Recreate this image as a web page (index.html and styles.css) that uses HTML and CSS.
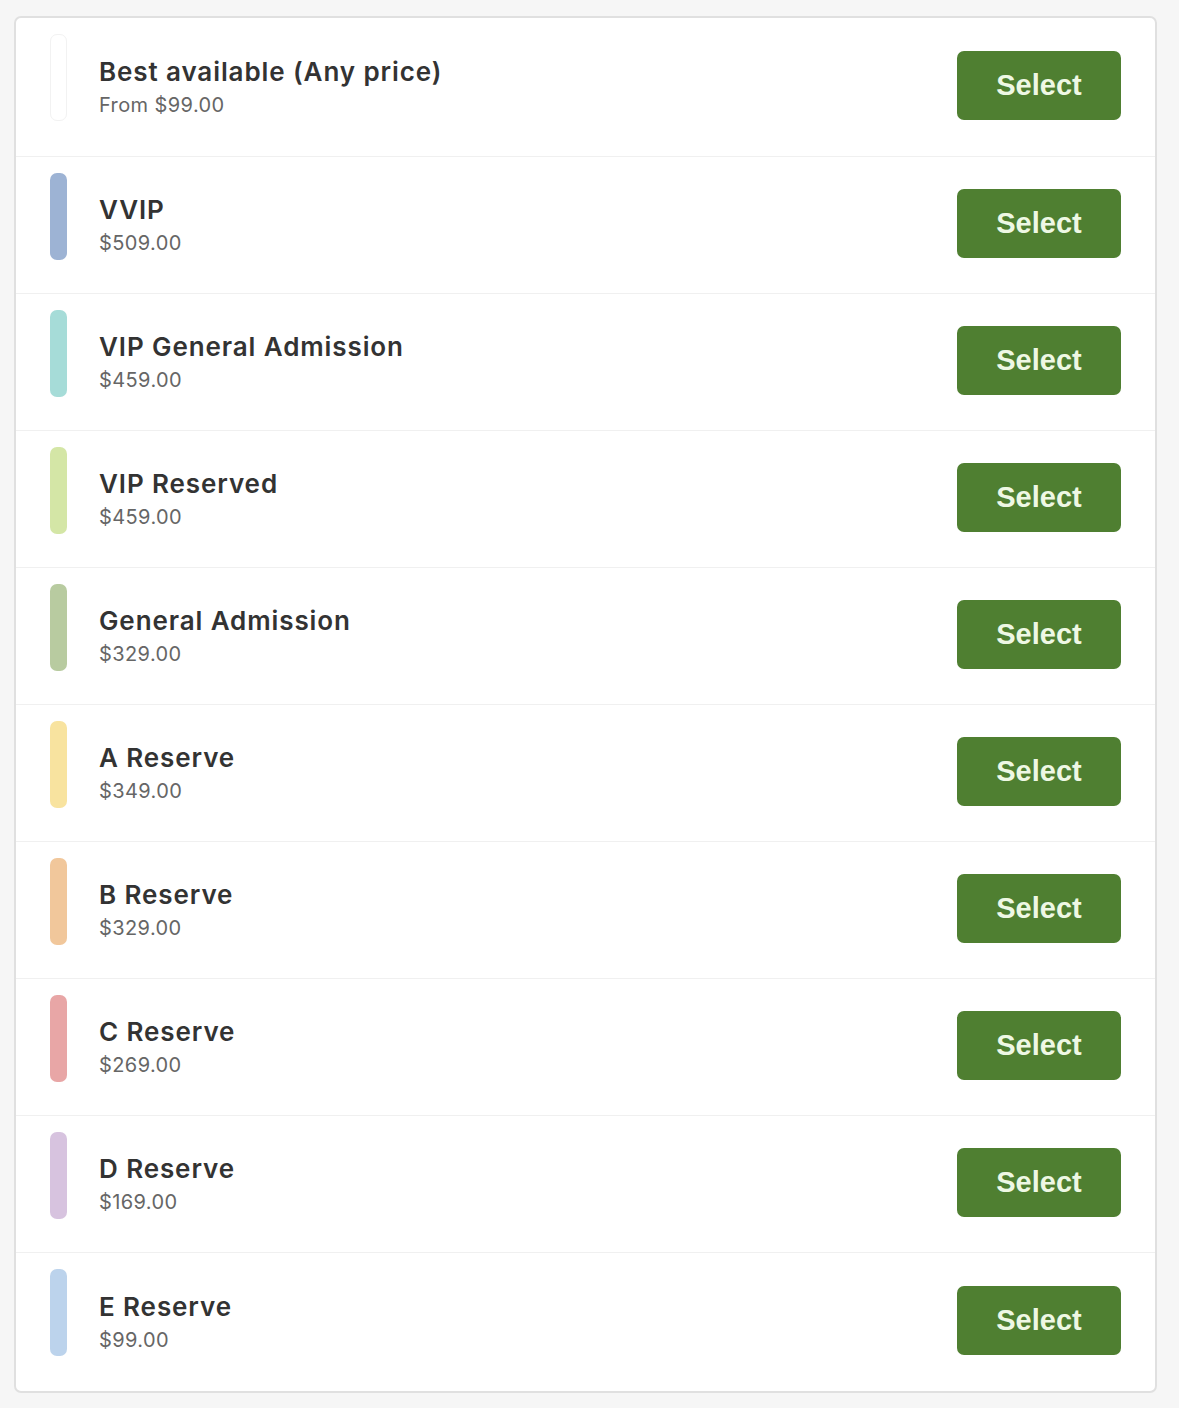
FILE: index.html
```html
<!DOCTYPE html>
<html lang="en">
<head>
  <meta charset="UTF-8">
  <meta name="viewport" content="width=device-width, initial-scale=1.0">
  <title>Tickets</title>
  <link rel="stylesheet" href="styles.css">
</head>
<body>
  <div class="card">
    <div class="row">
      <span class="swatch swatch-any"></span>
      <div class="info">
        <div class="name">Best available (Any price)</div>
        <div class="price">From $99.00</div>
      </div>
      <button class="select-btn">Select</button>
    </div>
    <div class="row">
      <span class="swatch swatch-vvip"></span>
      <div class="info">
        <div class="name">VVIP</div>
        <div class="price">$509.00</div>
      </div>
      <button class="select-btn">Select</button>
    </div>
    <div class="row">
      <span class="swatch swatch-vipga"></span>
      <div class="info">
        <div class="name">VIP General Admission</div>
        <div class="price">$459.00</div>
      </div>
      <button class="select-btn">Select</button>
    </div>
    <div class="row">
      <span class="swatch swatch-vipres"></span>
      <div class="info">
        <div class="name">VIP Reserved</div>
        <div class="price">$459.00</div>
      </div>
      <button class="select-btn">Select</button>
    </div>
    <div class="row">
      <span class="swatch swatch-ga"></span>
      <div class="info">
        <div class="name">General Admission</div>
        <div class="price">$329.00</div>
      </div>
      <button class="select-btn">Select</button>
    </div>
    <div class="row">
      <span class="swatch swatch-a"></span>
      <div class="info">
        <div class="name">A Reserve</div>
        <div class="price">$349.00</div>
      </div>
      <button class="select-btn">Select</button>
    </div>
    <div class="row">
      <span class="swatch swatch-b"></span>
      <div class="info">
        <div class="name">B Reserve</div>
        <div class="price">$329.00</div>
      </div>
      <button class="select-btn">Select</button>
    </div>
    <div class="row">
      <span class="swatch swatch-c"></span>
      <div class="info">
        <div class="name">C Reserve</div>
        <div class="price">$269.00</div>
      </div>
      <button class="select-btn">Select</button>
    </div>
    <div class="row">
      <span class="swatch swatch-d"></span>
      <div class="info">
        <div class="name">D Reserve</div>
        <div class="price">$169.00</div>
      </div>
      <button class="select-btn">Select</button>
    </div>
    <div class="row">
      <span class="swatch swatch-e"></span>
      <div class="info">
        <div class="name">E Reserve</div>
        <div class="price">$99.00</div>
      </div>
      <button class="select-btn">Select</button>
    </div>
  </div>
</body>
</html>
```

FILE: styles.css
```css
/* page */
body {
  margin: 0;
  padding: 16px 22px 16px 14px;
  background-color: #f6f6f6;
  font-family: Inter, "Noto Sans", sans-serif;
}
/* list card */
.card {
  background-color: #fff;
  border: 2px solid #e0e0e0;
  border-radius: 7px;
}
/* one ticket type */
.row {
  display: flex;
  align-items: center;
  height: 136px;
  padding: 0 34px 0 34px;
  border-top: 1px solid #f0f0f0;
}
.row:first-child {
  border-top: none;
  height: 138px;
}
.row:last-child {
  height: 138px;
}
/* colour bar */
.swatch {
  align-self: flex-start;
  flex: none;
  width: 17px;
  height: 87px;
  margin-top: 16px;
  border-radius: 7px;
}
.swatch-any   { background-color: #fff; border: 1px solid #f2f2f2; width: 15px; height: 85px; }
.swatch-vvip  { background-color: #9db3d4; }
.swatch-vipga { background-color: #a6dcd8; }
.swatch-vipres{ background-color: #d4e6a6; }
.swatch-ga    { background-color: #b8cba0; }
.swatch-a     { background-color: #f8e39f; }
.swatch-b     { background-color: #f1c79b; }
.swatch-c     { background-color: #e8a6a6; }
.swatch-d     { background-color: #d7c3df; }
.swatch-e     { background-color: #bcd3ec; }
/* texts */
.info {
  flex: 1;
  margin-left: 32px;
}
.name {
  font-size: 26px;
  font-weight: 600;
  line-height: 32px;
  letter-spacing: 0.9px;
  color: #333;
}
.price {
  margin-top: 4px;
  font-size: 20px;
  line-height: 26px;
  letter-spacing: 0.4px;
  color: #666;
}
/* button */
.select-btn {
  flex: none;
  width: 164px;
  height: 69px;
  margin-top: -3px;
  border: none;
  border-radius: 7px;
  background-color: #4f7f31;
  color: #eef8e4;
  font-family: "Liberation Sans", Arial, sans-serif;
  font-size: 29px;
  font-weight: 700;
  cursor: pointer;
}
```
